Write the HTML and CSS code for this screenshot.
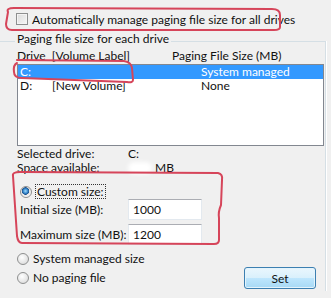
FILE: index.html
```html
<!DOCTYPE html>
<html lang="en">
<head>
    <meta charset="UTF-8">
    <title>Virtual Memory</title>
    <link rel="stylesheet" href="styles.css">
</head>
<body>
    <div class="dialog">
        <!-- Automatic checkbox -->
        <div class="auto-row">
            <span class="checkbox"></span>
            <span>Automatically manage paging file size for all drives</span>
        </div>

        <!-- Group box -->
        <div class="group">
            <span class="legend">Paging file size for each drive</span>
            <div class="cols">
                <span class="col-drive">Drive&nbsp; [Volume Label]</span>
                <span>Paging File Size (MB)</span>
            </div>
            <div class="list">
                <div class="row selected">
                    <span class="c-drive">C:</span>
                    <span class="c-label"></span>
                    <span>System managed</span>
                </div>
                <div class="row">
                    <span class="c-drive">D:</span>
                    <span class="c-label">[New Volume]</span>
                    <span>None</span>
                </div>
            </div>

            <div class="info">
                <div class="info-line"><span class="info-key">Selected drive:</span><span>C:</span></div>
                <div class="info-line"><span class="info-key">Space available:</span><span class="blur"></span><span>MB</span></div>
            </div>

            <div class="radio-row custom">
                <span class="radio checked"></span>
                <span class="focus">Custom size:</span>
            </div>
            <div class="field">
                <span class="field-label">Initial size (MB):</span>
                <span class="input">1000</span>
            </div>
            <div class="field">
                <span class="field-label">Maximum size (MB):</span>
                <span class="input">1200</span>
            </div>

            <div class="bottom">
                <div class="radios">
                    <div class="radio-row"><span class="radio"></span><span>System managed size</span></div>
                    <div class="radio-row"><span class="radio"></span><span>No paging file</span></div>
                </div>
                <button class="btn">Set</button>
            </div>
        </div>

        <!-- Red marker annotations -->
        <svg class="marks" width="331" height="298" viewBox="0 0 331 298">
            <path d="M8 12 Q6 8 14 8 L272 9 Q280 9 280 15 L280 27 Q280 30 274 30 L12 30 Q6 30 6 24 Z" />
            <path d="M17 60 L124 61 Q131 62 132 68 L133 80 Q133 83 127 82 L22 78 Q14 78 14 72 Q13 65 17 63" />
            <path d="M13 176 Q12 172 20 172 L218 173 Q223 174 222 180 L221 205 Q218 212 219 218 L219 240 Q219 244 214 244 L22 243 Q18 243 17 236 Z" />
        </svg>
    </div>
</body>
</html>
```

FILE: styles.css
```css
* {
    margin: 0;
    padding: 0;
    box-sizing: border-box;
}

body {
    font-family: Lato, "Open Sans", Arial, sans-serif;
    font-size: 12px;
    color: #111;
    background-color: #f0f0f0;
}

.dialog {
    position: relative;
    width: 331px;
    height: 298px;
    overflow: hidden;
}

/* Checkbox row */
.auto-row {
    display: flex;
    align-items: center;
    gap: 4px;
    padding: 11px 0 0 16px;
    height: 27px;
    line-height: 15px;
}

.checkbox {
    width: 12px;
    height: 12px;
    border: 1px solid #8e8f8f;
    background: linear-gradient(135deg, #dcdcdc, #f6f6f6);
    box-shadow: inset 0 0 0 1px #f4f4f4;
}

/* Group box */
.group {
    margin: 14px 5px 0 0;
    height: 250px;
    border-top: 1px solid #d5dfe5;
    border-right: 1px solid #d5dfe5;
    box-shadow: 1px 0 0 #fff;
}

.legend {
    display: block;
    width: fit-content;
    margin: -11px 0 0 15px;
    padding: 0 2px;
    line-height: 15px;
    background-color: #f0f0f0;
}

.cols {
    display: flex;
    padding-left: 17px;
    line-height: 14px;
    margin-top: 3px;
}

.col-drive {
    width: 155px;
}

.list {
    margin: 1px 1px 0 17px;
    height: 82px;
    background-color: #fff;
    border: 1px solid #828790;
}

.row {
    display: flex;
    height: 14px;
    line-height: 14px;
    padding-left: 2px;
}

.row.selected {
    background-color: #3399ff;
    color: #fff;
}

.c-drive {
    width: 32px;
}

.c-label {
    width: 149px;
}

.info {
    margin-top: 1px;
    padding-left: 17px;
    line-height: 14px;
}

.info-line {
    display: flex;
}

.info-key {
    width: 111px;
}

.blur {
    width: 24px;
    height: 12px;
    margin: 1px 3px 0 0;
    border-radius: 6px;
    background-color: #fff;
    filter: blur(2px);
}

/* Radio buttons */
.radio-row {
    display: flex;
    align-items: center;
    gap: 4px;
    line-height: 15px;
}

.radio {
    width: 12px;
    height: 12px;
    border-radius: 50%;
    border: 1px solid #8e8f8f;
    background: radial-gradient(circle at 40% 35%, #ffffff, #d4d4d4);
}

.radio.checked {
    background: radial-gradient(circle at 45% 40%, #9fdcff 0, #2f7fc4 2.5px, #1a4f8a 3.5px, #e6e6e6 4px, #f6f6f6 6px);
}

.custom {
    margin-top: 10px;
    padding-left: 20px;
    height: 13px;
}

.focus {
    outline: 1px dotted #333;
    outline-offset: 0;
    padding: 0 1px;
    line-height: 13px;
}

.field {
    display: flex;
    align-items: center;
    padding-left: 20px;
    height: 22px;
}

.field + .field {
    margin-top: 3px;
}

.field-label {
    width: 108px;
}

.input {
    width: 74px;
    height: 21px;
    line-height: 19px;
    padding-left: 4px;
    background-color: #fff;
    border: 1px solid #e3e9ef;
    border-top-color: #abadb3;
}

/* Bottom area */
.bottom {
    display: flex;
    justify-content: space-between;
    align-items: flex-end;
    padding: 6px 9px 0 17px;
}

.radios {
    display: flex;
    flex-direction: column;
    gap: 4px;
}

.btn {
    width: 72px;
    height: 22px;
    margin-bottom: -4px;
    font-family: inherit;
    font-size: 12px;
    color: #111;
    border: 1px solid #3c7fb1;
    border-radius: 3px;
    background: linear-gradient(#eaf6fd 0%, #d9f0fc 50%, #bee6fd 51%, #a7d9f5 100%);
    box-shadow: inset 0 0 0 1px #e4f4fc;
}

/* Annotation overlay */
.marks {
    position: absolute;
    top: 0;
    left: 0;
    pointer-events: none;
}

.marks path {
    fill: none;
    stroke: #d6455a;
    stroke-width: 2;
    stroke-linejoin: round;
    stroke-linecap: round;
}
```
